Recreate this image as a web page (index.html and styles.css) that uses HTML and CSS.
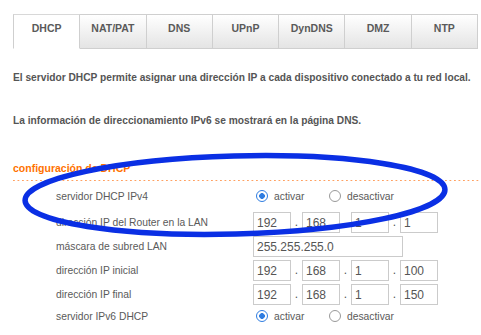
FILE: index.html
```html
<!DOCTYPE html>
<html lang="es">
<head>
    <meta charset="UTF-8">
    <meta name="viewport" content="width=device-width, initial-scale=1.0">
    <title>DHCP</title>
    <link rel="stylesheet" href="styles.css">
</head>
<body>
    <ul class="tabs">
        <li class="tab active">DHCP</li>
        <li class="tab">NAT/PAT</li>
        <li class="tab">DNS</li>
        <li class="tab">UPnP</li>
        <li class="tab">DynDNS</li>
        <li class="tab">DMZ</li>
        <li class="tab">NTP</li>
    </ul>

    <div class="content">
        <p class="intro">El servidor DHCP permite asignar una dirección IP a cada dispositivo conectado a tu red local.</p>
        <p class="intro">La información de direccionamiento IPv6 se mostrará en la página DNS.</p>

        <h2 class="section-title">configuración de DHCP</h2>
        <div class="dots"></div>

        <div class="form">
            <label class="label">servidor DHCP IPv4</label>
            <div class="field">
                <label class="choice"><input type="radio" name="v4" checked> activar</label>
                <label class="choice"><input type="radio" name="v4"> desactivar</label>
            </div>

            <label class="label">dirección IP del Router en la LAN</label>
            <div class="field">
                <input class="ip" value="192"><span class="sep">.</span>
                <input class="ip" value="168"><span class="sep">.</span>
                <input class="ip" value="1"><span class="sep">.</span>
                <input class="ip" value="1">
            </div>

            <label class="label">máscara de subred LAN</label>
            <div class="field">
                <input class="mask" value="255.255.255.0">
            </div>

            <label class="label">dirección IP inicial</label>
            <div class="field">
                <input class="ip" value="192"><span class="sep">.</span>
                <input class="ip" value="168"><span class="sep">.</span>
                <input class="ip" value="1"><span class="sep">.</span>
                <input class="ip" value="100">
            </div>

            <label class="label">dirección IP final</label>
            <div class="field">
                <input class="ip" value="192"><span class="sep">.</span>
                <input class="ip" value="168"><span class="sep">.</span>
                <input class="ip" value="1"><span class="sep">.</span>
                <input class="ip" value="150">
            </div>

            <label class="label row-last">servidor IPv6 DHCP</label>
            <div class="field row-last">
                <label class="choice"><input type="radio" name="v6" checked> activar</label>
                <label class="choice"><input type="radio" name="v6"> desactivar</label>
            </div>
        </div>
    </div>

    <!-- hand-drawn highlight -->
    <svg class="mark" width="481" height="335" viewBox="0 0 481 335">
        <ellipse cx="235" cy="195" rx="210" ry="39" transform="rotate(-1.5 235 195)"
                 fill="none" stroke="#0a2fe4" stroke-width="5.5"/>
    </svg>
</body>
</html>
```

FILE: styles.css
```css
body {
    margin: 0;
    font-family: "Liberation Sans", Arial, Helvetica, sans-serif;
    color: #555;
    background: #fff;
    position: relative;
    width: 481px;
    height: 335px;
    overflow: hidden;
}

.tabs {
    display: flex;
    list-style: none;
    margin: 14px 3px 0 13px;
    padding: 0;
}

.tab {
    flex: 1;
    height: 33px;
    line-height: 26px;
    text-align: center;
    font-size: 10.5px;
    font-weight: bold;
    color: #5a5a5a;
    border: 1px solid #cfcfcf;
    border-left: none;
    background: linear-gradient(#fff, #e4e4e4);
}

.tab.active {
    border-left: 1px solid #cfcfcf;
    border-top: 1px solid #d8d8d8;
    border-bottom-color: transparent;
    background: #fff;
}

.content {
    padding: 0 0 0 13px;
}

.intro {
    margin: 22px 0 0;
    font-size: 10.2px;
    font-weight: bold;
    line-height: 14px;
    white-space: nowrap;
    color: #555;
}

.intro + .intro {
    margin-top: 29px;
}

.section-title {
    margin: 33px 0 0;
    font-size: 10.5px;
    font-weight: bold;
    line-height: 14px;
    color: #ff7200;
}

.dots {
    height: 1px;
    margin-top: 5px;
    background-image: linear-gradient(to right, #ffa060 40%, transparent 40%);
    background-size: 4.5px 1px;
}

.form {
    display: grid;
    grid-template-columns: 197px auto;
    grid-template-rows: 24px 20px 20px 20px 20px 18px;
    row-gap: 4px;
    margin: 3px 0 0 43px;
    font-size: 10.3px;
}

.label {
    display: flex;
    align-items: center;
    color: #5a5a5a;
}

.field {
    display: flex;
    align-items: center;
}

.row-last {
    margin-top: -2px;
}

.choice {
    display: flex;
    align-items: center;
    width: 73px;
    color: #5a5a5a;
}

.choice input {
    appearance: none;
    width: 12px;
    height: 12px;
    margin: 0 6px 0 3px;
    border: 1.5px solid #999;
    border-radius: 50%;
    background: #fff;
    box-sizing: border-box;
}

.choice input:checked {
    border-color: #2f7de1;
    background: radial-gradient(circle, #2f7de1 0 2.6px, #fff 3.1px);
}

.ip,
.mask {
    box-sizing: border-box;
    height: 21px;
    border: 1px solid #cbcbcb;
    padding: 1px 3px 0;
    font: 12px "Liberation Sans", Arial, sans-serif;
    color: #555;
    outline: none;
}

.ip {
    width: 38px;
}

.mask {
    width: 150px;
}

.sep {
    width: 11px;
    text-align: center;
    font-size: 12px;
    color: #555;
}

.mark {
    position: absolute;
    left: 0;
    top: 0;
    pointer-events: none;
}
```
